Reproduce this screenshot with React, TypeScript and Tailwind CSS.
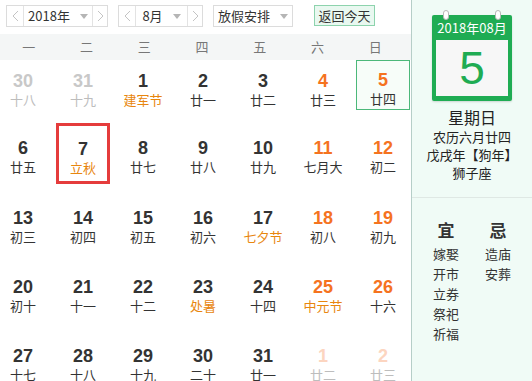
import React from 'react';

type Day = {
  n: number;
  lunar: string;
  kind?: 'prev' | 'next';
  weekend?: boolean;
  fest?: boolean;
  selected?: boolean;
  today?: boolean;
};

const rows: Day[][] = [
  [
    { n: 30, lunar: '十八', kind: 'prev' },
    { n: 31, lunar: '十九', kind: 'prev' },
    { n: 1, lunar: '建军节', fest: true },
    { n: 2, lunar: '廿一' },
    { n: 3, lunar: '廿二' },
    { n: 4, lunar: '廿三', weekend: true },
    { n: 5, lunar: '廿四', weekend: true, today: true },
  ],
  [
    { n: 6, lunar: '廿五' },
    { n: 7, lunar: '立秋', fest: true, selected: true },
    { n: 8, lunar: '廿七' },
    { n: 9, lunar: '廿八' },
    { n: 10, lunar: '廿九' },
    { n: 11, lunar: '七月大', weekend: true },
    { n: 12, lunar: '初二', weekend: true },
  ],
  [
    { n: 13, lunar: '初三' },
    { n: 14, lunar: '初四' },
    { n: 15, lunar: '初五' },
    { n: 16, lunar: '初六' },
    { n: 17, lunar: '七夕节', fest: true },
    { n: 18, lunar: '初八', weekend: true },
    { n: 19, lunar: '初九', weekend: true },
  ],
  [
    { n: 20, lunar: '初十' },
    { n: 21, lunar: '十一' },
    { n: 22, lunar: '十二' },
    { n: 23, lunar: '处暑', fest: true },
    { n: 24, lunar: '十四' },
    { n: 25, lunar: '中元节', weekend: true, fest: true },
    { n: 26, lunar: '十六', weekend: true },
  ],
  [
    { n: 27, lunar: '十七' },
    { n: 28, lunar: '十八' },
    { n: 29, lunar: '十九' },
    { n: 30, lunar: '二十' },
    { n: 31, lunar: '廿一' },
    { n: 1, lunar: '廿二', kind: 'next', weekend: true },
    { n: 2, lunar: '廿三', kind: 'next', weekend: true },
  ],
];

const weekNames = ['一', '二', '三', '四', '五', '六', '日'];
const yi = ['嫁娶', '开市', '立券', '祭祀', '祈福'];
const ji = ['造庙', '安葬'];

const cjk = "font-['Noto_Sans_CJK_SC',sans-serif]";
const num = "font-['Liberation_Sans',Arial,sans-serif]";

const Chevron = ({ dir }: { dir: 'l' | 'r' }) => (
  <svg width="7" height="12" viewBox="0 0 7 12" fill="none">
    <polyline
      points={dir === 'l' ? '6,1 1,6 6,11' : '1,1 6,6 1,11'}
      stroke="#c4c4c4"
      strokeWidth="1"
    />
  </svg>
);

const Caret = () => (
  <svg width="8" height="5" viewBox="0 0 8 5">
    <polygon points="0,0 8,0 4,5" fill="#b5b5b5" />
  </svg>
);

const Stepper = ({ label, w, mid }: { label: string; w: string; mid: string }) => (
  <div className={`flex h-[22px] border border-[#dcdcdc] bg-white ${w}`}>
    <div className="flex w-[17px] items-center justify-center border-r border-[#e3e3e3]">
      <Chevron dir="l" />
    </div>
    <div className={`flex items-center justify-center gap-[10px] ${mid} text-[13px] text-[#333]`}>
      <span>{label}</span>
      <Caret />
    </div>
    <div className="flex flex-1 items-center justify-center border-l border-[#e3e3e3]">
      <Chevron dir="r" />
    </div>
  </div>
);

const Cell = ({ d, first }: { d: Day; first: boolean }) => {
  let numColor = 'text-[#333]';
  if (d.kind === 'prev') numColor = 'text-[#c8c8c8]';
  else if (d.kind === 'next') numColor = 'text-[#fcd5c0]';
  else if (d.weekend) numColor = 'text-[#f5731f]';

  let lunarColor = 'text-[#333]';
  if (d.kind) lunarColor = 'text-[#bdbdbd]';
  else if (d.fest) lunarColor = 'text-[#e8860e]';

  let box = 'border-2 border-transparent';
  if (d.today) box = 'border border-[#4cb87a] bg-[#f7fdf9]';
  if (d.selected) box = 'border-[3px] border-[#e53c3c]';

  return (
    <div
      className={`mx-[3px] flex flex-col items-center ${first ? 'h-[50px] pt-[9px]' : 'h-[61px] pt-[13px]'} ${box}`}
    >
      <span className={`${num} text-[18px] font-bold leading-[20px] ${numColor}`}>{d.n}</span>
      <span className={`${cjk} text-[13px] leading-[18px] ${lunarColor}`}>{d.lunar}</span>
    </div>
  );
};

export default function App() {
  return (
    <div className={`flex h-[381px] w-[532px] overflow-hidden bg-white ${cjk}`}>
      <div className="flex w-[411px] shrink-0 flex-col overflow-hidden">
        <div className="flex h-[34px] shrink-0 items-start gap-[10px] pl-[6px] pt-[5px]">
          <Stepper label="2018年" w="w-[102px]" mid="w-[68px]" />
          <Stepper label="8月" w="w-[85px]" mid="w-[51px]" />
          <div className="flex h-[22px] w-[80px] items-center justify-center gap-[10px] border border-[#dcdcdc] bg-white text-[13px] text-[#333]">
            <span>放假安排</span>
            <Caret />
          </div>
          <div className="ml-[11px] flex h-[21px] w-[61px] items-center justify-center border border-[#8dd3ad] bg-[#e9f8f0] text-[13px] text-[#333]">
            返回今天
          </div>
        </div>
        <div className="h-[26px] shrink-0 bg-[#f4f6f6]">
          <div className="grid h-full w-[404px] grid-cols-7 items-center text-[13px] text-[#777]">
            {weekNames.map((w) => (
              <span key={w} className="text-center">
                {w}
              </span>
            ))}
          </div>
        </div>
        <div className="ml-[-7px] flex shrink-0 flex-col">
          {rows.map((r, i) => (
            <div
              key={i}
              className={`grid shrink-0 grid-cols-[repeat(7,60px)] items-start ${i === 0 ? 'h-[63px]' : i === 1 ? 'h-[70px]' : 'h-[69px]'}`}
            >
              {r.map((d, j) => (
                <Cell key={j} d={d} first={i === 0} />
              ))}
            </div>
          ))}
        </div>
      </div>

      <div className="flex flex-1 flex-col border-l border-[#b6cec8] bg-[#f0fbf6]">
        <div className="flex h-[198px] shrink-0 flex-col items-center border-b border-[#dfe8e4]">
          <div className="relative mt-[15px] w-[80px] rounded-[2px] bg-[#1fac53] px-[4px] pb-[5px] shadow-[0_1px_2px_rgba(0,0,0,0.15)]">
            <div className="absolute left-[11px] top-[-5px] h-[10px] w-[6px] rounded-full border border-[#b8b8b8] bg-white" />
            <div className="absolute right-[11px] top-[-5px] h-[10px] w-[6px] rounded-full border border-[#b8b8b8] bg-white" />
            <div className="flex h-[25px] items-center justify-center text-[13px] text-white">
              2018年08月
            </div>
            <div className={`flex h-[56px] items-center justify-center bg-[#f7f7f7] ${num} text-[46px] leading-none text-[#1fac53]`}>
              5
            </div>
          </div>
          <div className="mt-[6px] text-[16px] leading-[20px] text-[#222]">星期日</div>
          <div className="mt-[1px] text-[13px] leading-[18px] text-[#222]">农历六月廿四</div>
          <div className="text-[13px] leading-[18px] text-[#222]">戊戌年【狗年】</div>
          <div className="text-[13px] leading-[18px] text-[#222]">狮子座</div>
        </div>
        <div className="flex justify-center gap-[24px] pt-[21px]">
          <div className="flex w-[28px] flex-col items-center">
            <span className="mb-[3px] text-[17px] font-bold leading-[22px] text-[#333]">宜</span>
            {yi.map((t) => (
              <span key={t} className="text-[13px] leading-[20px] text-[#333]">
                {t}
              </span>
            ))}
          </div>
          <div className="flex w-[28px] flex-col items-center">
            <span className="mb-[3px] text-[17px] font-bold leading-[22px] text-[#333]">忌</span>
            {ji.map((t) => (
              <span key={t} className="text-[13px] leading-[20px] text-[#333]">
                {t}
              </span>
            ))}
          </div>
        </div>
      </div>
    </div>
  );
}
